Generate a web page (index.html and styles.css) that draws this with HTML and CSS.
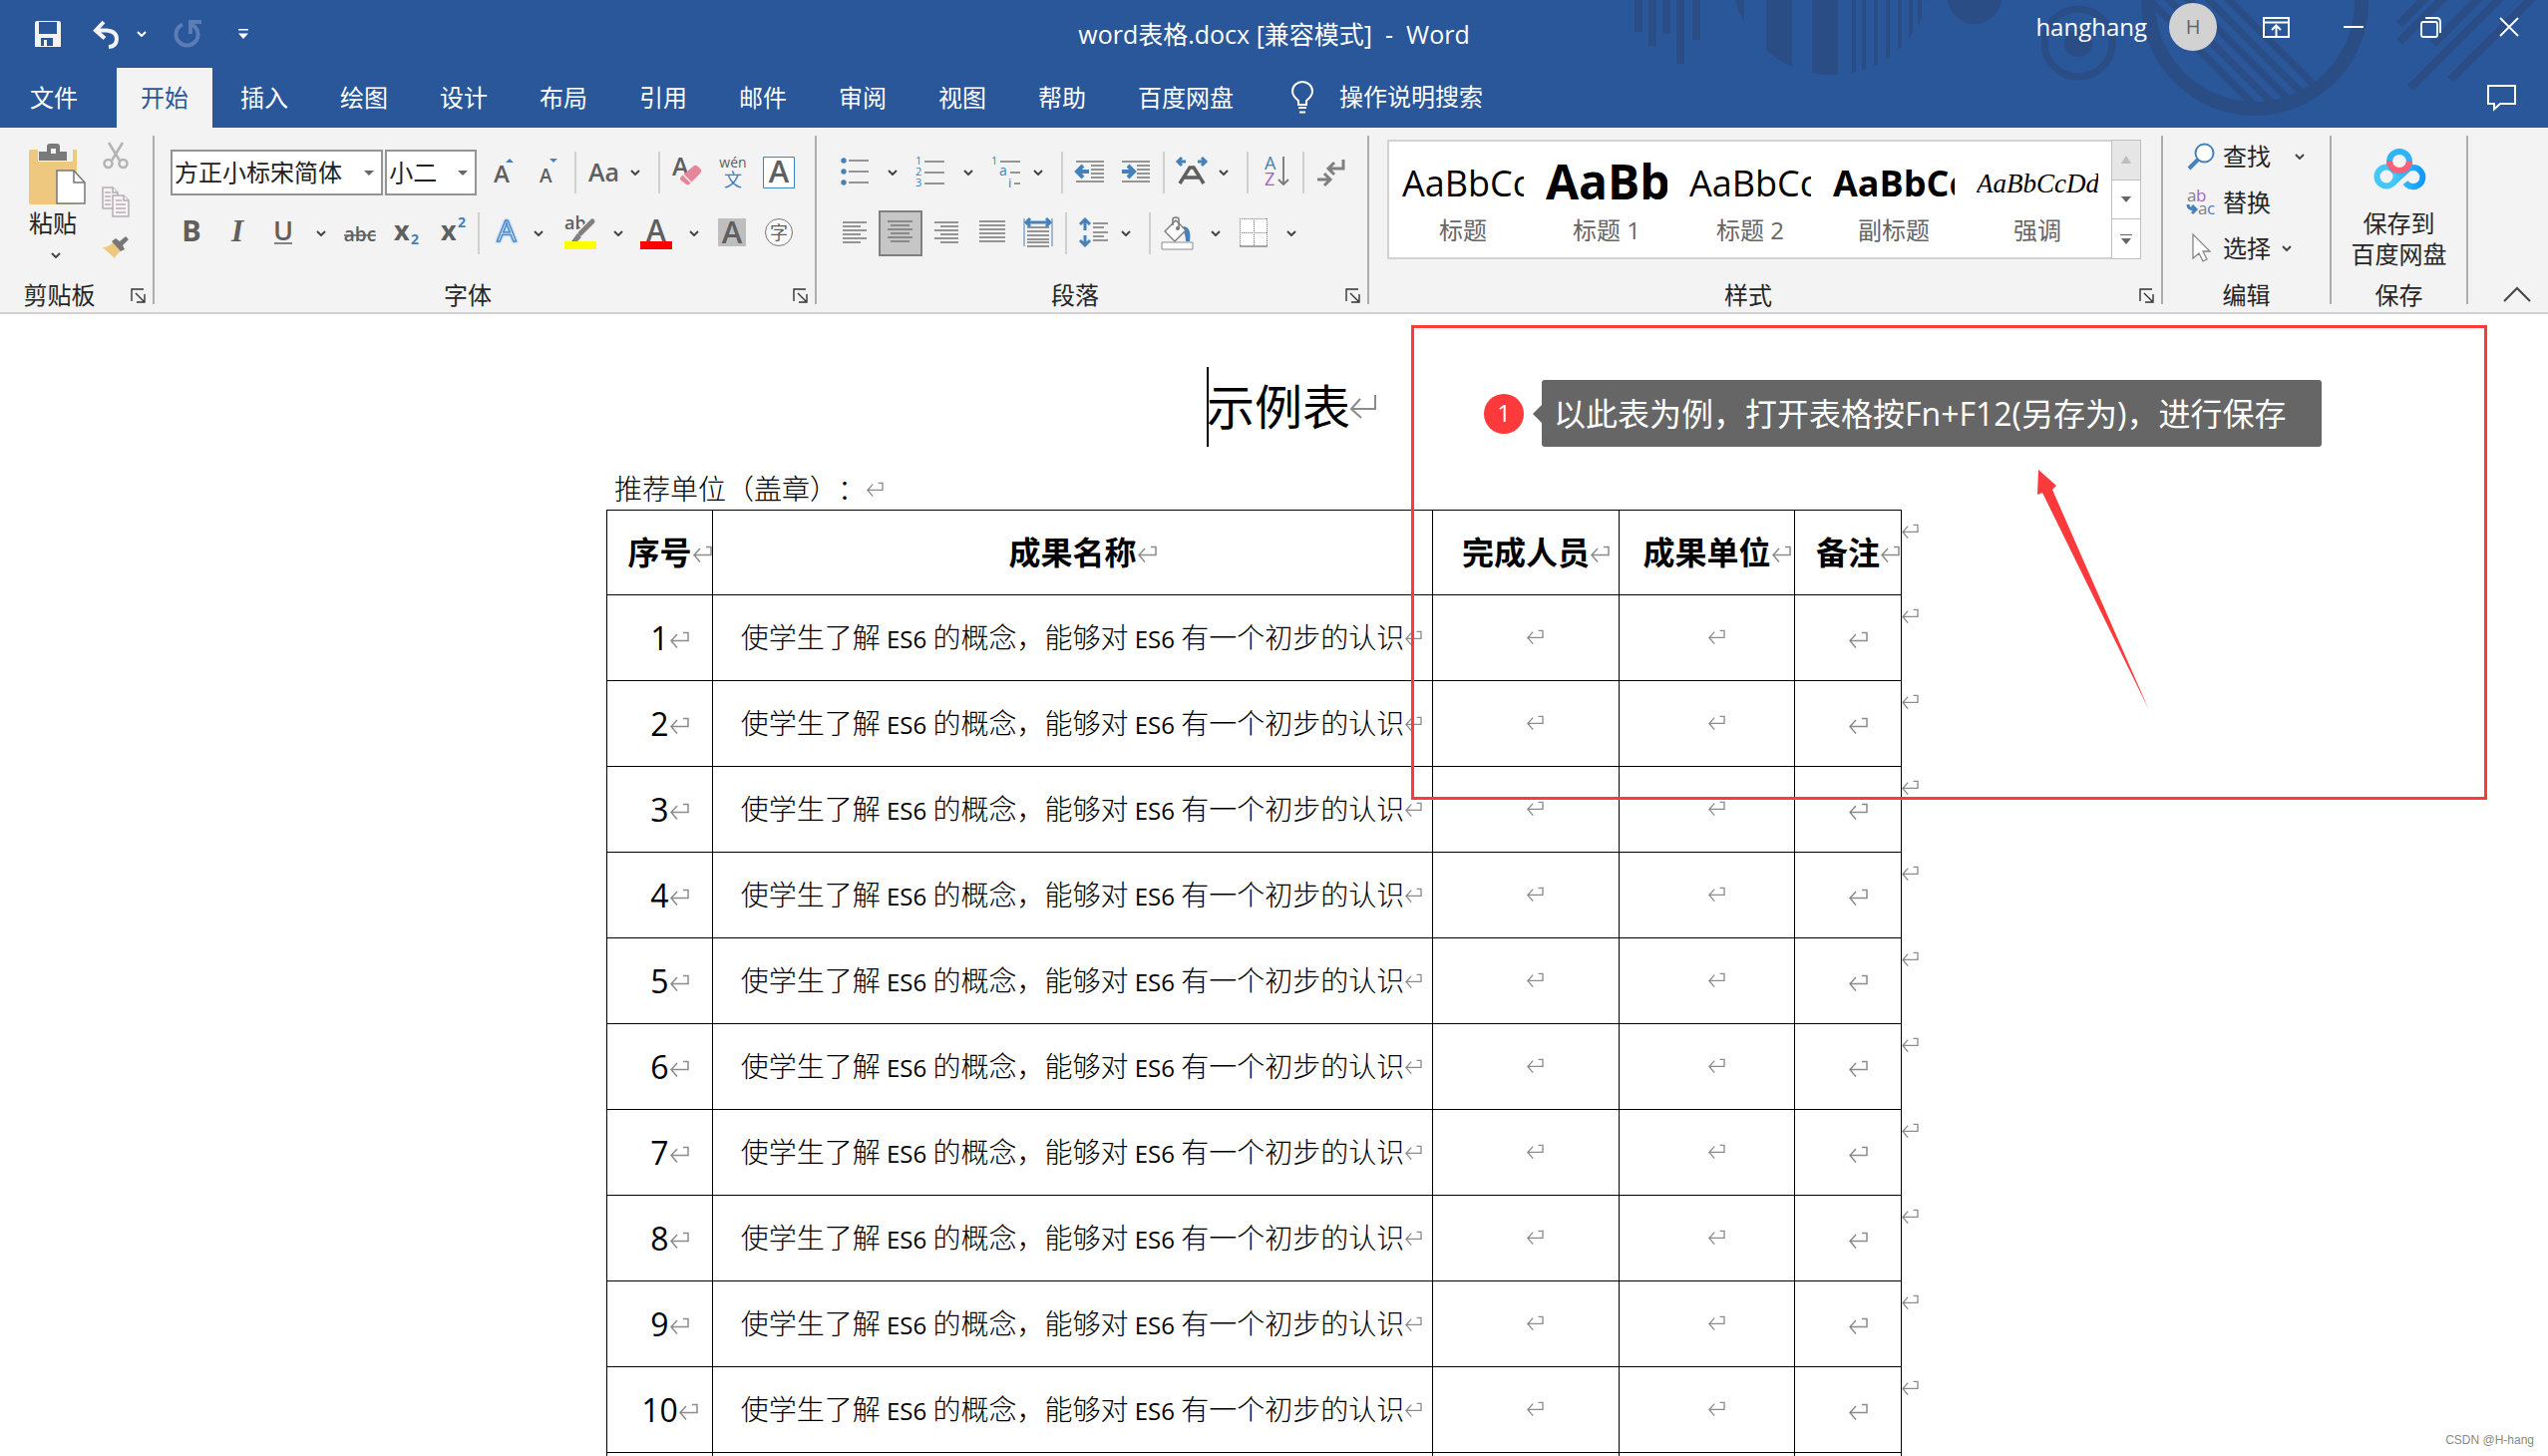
FILE: index.html
```html
<!DOCTYPE html>
<html lang="zh-CN">
<head>
<meta charset="utf-8">
<title>word表格.docx - Word</title>
<link rel="stylesheet" href="styles.css">
</head>
<body>
<svg class="defs" aria-hidden="true">
  <symbol id="chev" viewBox="0 0 10 6"><path d="M1 1l4 4 4-4" fill="none" stroke="currentColor" stroke-width="2"/></symbol>
  <symbol id="launch" viewBox="0 0 15 15"><path d="M1 13V1h12M5 5l8 8M14 6v8H6" fill="none" stroke="#333" stroke-width="1.4"/></symbol>
  <symbol id="ret" viewBox="0 0 20 18"><path d="M14 1.5h5v8H2M8 3L2 9.500l6 7" fill="none" stroke="#8c8c8c" stroke-width="1.500"/></symbol>
  <symbol id="retbig" viewBox="0 0 26 24"><path d="M25 0v14H1M10 4L1 14l10 9" fill="none" stroke="#8c8c8c" stroke-width="2"/></symbol>
</svg>
<div class="app">
<header class="header">
  <svg class="decor" viewBox="0 0 955 128" aria-hidden="true">
    <defs>
      <clipPath id="c1"><circle cx="237" cy="-25" r="100"/></clipPath>
      <clipPath id="c2"><circle cx="661" cy="2" r="104"/></clipPath>
    </defs>
    <g fill="#2a4d85">
      <path d="M39 0h8v32h-8zM53 0h8v46h-8zM67 0h8v34h-8zM81 0h8v64h-8zM97 0h8v40h-8z"/>
      <path clip-path="url(#c1)" d="M133 0h16v80h-16zM171 0h26v80h-26zM217 0h26v80h-26zM257 0h4v80h-4zM267 0h4v80h-4zM279 0h4v80h-4zM291 0h4v80h-4zM303 0h4v80h-4zM314 0h4v80h-4zM323 0h4v80h-4zM333 0h4v80h-4z"/>
      <circle cx="380" cy="-3" r="27"/>
      <circle cx="484" cy="43" r="14"/>
    </g>
    <g fill="none" stroke="#2a4d85">
      <circle cx="484" cy="43" r="34" stroke-width="7"/>
      <circle cx="661" cy="2" r="107" stroke-width="14"/>
      <path clip-path="url(#c2)" stroke-width="7" d="M540-15l130 130M560-15l130 130M580-15l130 130M600-15l130 130M620-15l130 130"/>
      <path stroke-width="8" d="M806 24l30-30M806 42l50-50M840 44l50-50M817 88l100-100M857 80l100-100"/>
    </g>
  </svg>
  <div class="titlebar">
    <div class="quick">
      <button class="qbtn" aria-label="保存"><svg width="26" height="26" viewBox="0 0 26 26"><path fill="#f3f3f3" fill-rule="evenodd" d="M0 2q0-2 2-2h22q2 0 2 2v24H0zM4 1v12h18V1zM6 17v8h3v-6h3v6h6v-8z"/></svg></button>
      <div class="undo"><button class="qbtn" aria-label="撤消"><svg width="27" height="27" viewBox="0 0 27 27"><path d="M11 1L3 9.500l9 8M4 9.500h10q10 1 10 8.500t-8 8" fill="none" stroke="#f3f3f3" stroke-width="4"/></svg></button><button class="qdrop" aria-label="撤消选项"><svg width="10" height="6"><use href="#chev"/></svg></button></div>
      <button class="qbtn" aria-label="重复"><svg width="28" height="28" viewBox="0 0 28 28"><path d="M9 4.500a11 11 0 1 0 9 0M17 14V2h11" fill="none" stroke="#5a7db5" stroke-width="4"/></svg></button>
      <button class="qdrop" aria-label="自定义快速访问工具栏"><svg width="10" height="10" viewBox="0 0 10 10"><path d="M0 0h10v1.500H0zM0 4.500h10L5 10z" fill="#fff"/></svg></button>
    </div>
    <h1 class="doc-name">word表格.docx [兼容模式]&nbsp; -&nbsp; Word</h1>
    <div class="account">
      <span class="user">hanghang</span><span class="avatar">H</span>
      <button class="win" aria-label="功能区显示选项"><svg width="27" height="21" viewBox="0 0 27 21"><path d="M1 1h25v19H1zM1 5.500h25M13.500 19V9M9 13l4.500-4.500L18 13" fill="none" stroke="#fff" stroke-width="2"/></svg></button>
      <button class="win" aria-label="最小化"><svg width="20" height="2"><path d="M0 0h20v2H0z" fill="#fff"/></svg></button>
      <button class="win" aria-label="还原"><svg width="22" height="21" viewBox="0 0 22 21"><path d="M3 5h12q2 0 2 2v11q0 2-2 2H3q-2 0-2-2V7q0-2 2-2zM5 1h11q4 0 4 4v11" fill="none" stroke="#fff" stroke-width="1.800"/></svg></button>
      <button class="win" aria-label="关闭"><svg width="20" height="20" viewBox="0 0 20 20"><path d="M1 1l18 18M19 1L1 19" stroke="#fff" stroke-width="1.800"/></svg></button>
    </div>
  </div>
  <nav class="tabs">
    <button class="tab file">文件</button><button class="tab active">开始</button><button class="tab">插入</button><button class="tab">绘图</button><button class="tab">设计</button><button class="tab">布局</button><button class="tab">引用</button><button class="tab">邮件</button><button class="tab">审阅</button><button class="tab">视图</button><button class="tab">帮助</button><button class="tab">百度网盘</button>
    <button class="tellme"><svg width="22" height="33" viewBox="0 0 22 33"><path d="M7 24v-4Q1 15 1 10.500a10 9.500 0 0 1 20 0Q21 15 15 20v4zM7 27h8M8 31.500h6" fill="none" stroke="#fff" stroke-width="2"/></svg>操作说明搜索</button>
    <button class="comment" aria-label="批注"><svg width="29" height="26" viewBox="0 0 29 26"><path d="M1 1h27v18H13l-6 5.500V19H1z" fill="none" stroke="#fff" stroke-width="2"/></svg></button>
  </nav>
</header>

<section class="ribbon" aria-label="功能区">
  <div class="group g-clip">
    <div class="clip">
      <button class="paste">
        <svg width="57" height="61" viewBox="0 0 57 61"><path d="M2 6h46v55H2q-2 0-2-2V8q0-2 2-2z" fill="#edc87e"/><path d="M9 4h35v14H9z" fill="#f3f3f3"/><path fill="#7a7a7a" fill-rule="evenodd" d="M10 8h8V3q0-3 3-3h7q3 0 3 3v5h7v9H10zM22 5h5v5h-5z"/><path d="M28 27h17l11 12v21H28z" fill="#fff" stroke="#777" stroke-width="1.500"/><path d="M45 27v12h11" fill="none" stroke="#777" stroke-width="1.500"/></svg>
        <span>粘贴</span><svg class="chev" width="10" height="6"><use href="#chev"/></svg>
      </button>
      <div class="clip-side">
        <button class="side" aria-label="剪切"><svg width="26" height="28" viewBox="0 0 26 28"><g fill="none" stroke="#b4b4b4" stroke-width="2.500"><path d="M6 1l11 18M20 1L9 19"/><circle cx="5.500" cy="22" r="4"/><circle cx="20.500" cy="22" r="4"/></g></svg></button>
        <button class="side" aria-label="复制"><svg width="28" height="31" viewBox="0 0 28 31"><g fill="#f6f2f6" stroke="#b5aeb5" stroke-width="1.500"><path d="M1 1h10l5 5v16H1z"/><path d="M11 9h11l5 5v16H11z"/><path d="M11 1v5h5M22 9v5h5M3 6h6M3 10h6M3 14h6M3 18h6M14 14h6M14 18h10M14 22h10M14 26h10"/></g></svg></button>
        <button class="side" aria-label="格式刷"><svg width="26" height="22" viewBox="0 0 26 22"><path d="M0 11q6 0 10-5l9 8q-5 3-7 8z" fill="#edc87e"/><path d="M9 5l4-3 4 3 6-5 3 3-6 6 2 4-4 2z" fill="#777"/></svg></button>
      </div>
    </div>
    <div class="label"><span>剪贴板</span><button class="launcher" aria-label="剪贴板设置"><svg width="15" height="15"><use href="#launch"/></svg></button></div>
  </div>

  <div class="group g-font">
    <div class="row row-top">
      <span class="combo combo-font"><select aria-label="字体"><option>方正小标宋简体</option></select></span>
      <span class="combo combo-size"><select aria-label="字号"><option>小二</option></select></span>
      <button class="tool" aria-label="增大字号"><svg width="34" height="32"><text x="9" y="26" font-size="24" class="ga">A</text><path d="M21 6l4-4 4 4z" fill="#4681b9"/></svg></button>
      <button class="tool" aria-label="减小字号"><svg width="34" height="32"><text x="9" y="26" font-size="19" class="ga">A</text><path d="M19 2h8l-4 4z" fill="#4681b9"/></svg></button>
      <i class="sep"></i>
      <div class="split tight"><button class="tool" aria-label="更改大小写"><svg width="34" height="32"><text x="2" y="25" font-size="25" class="ga">Aa</text></svg></button><button class="drop" aria-label="更改大小写选项"><svg width="10" height="6"><use href="#chev"/></svg></button></div>
      <div class="cluster">
        <i class="sep"></i>
        <button class="tool" aria-label="清除格式"><svg width="32" height="32"><text x="1" y="19" font-size="25" class="ga">A</text><path d="M23 9q2-1 4 1l3 3q1 2-1 4L18 28q-2 1-4-1l-4-3q-2-2 0-4z" fill="#e6869a"/><path d="M12 18l8 8" stroke="#f3f3f3" stroke-width="1.500"/></svg></button>
        <button class="tool" aria-label="拼音指南"><svg width="32" height="34"><text x="16" y="12" font-size="14" class="g mid">wén</text><text x="16" y="31" font-size="18" class="b mid">文</text></svg></button>
        <button class="tool" aria-label="字符边框"><svg width="32" height="32"><path d="M.5.5h31v31H.5z" fill="#fff" stroke="#4681b9"/><text x="16" y="26" font-size="31" class="ga mid">A</text></svg></button>
      </div>
    </div>
    <div class="row">
      <button class="tool" aria-label="加粗"><svg width="32" height="32"><text x="16" y="24" font-size="29" font-weight="700" class="g mid">B</text></svg></button>
      <button class="tool" aria-label="倾斜"><svg width="32" height="32"><text x="16" y="24" font-size="31" class="g mid serif">I</text></svg></button>
      <div class="split"><button class="tool" aria-label="下划线"><svg width="32" height="34"><text x="16" y="24" font-size="27" class="ga mid">U</text><path d="M7 27h18" stroke="#5f5f5f" stroke-width="1.500"/></svg></button><button class="drop" aria-label="下划线选项"><svg width="10" height="6"><use href="#chev"/></svg></button></div>
      <button class="tool" aria-label="删除线"><svg width="34" height="32"><text x="18" y="24" font-size="19" class="ga mid">abc</text><path d="M2 18h32" stroke="#5f5f5f" stroke-width="1.500"/></svg></button>
      <button class="tool" aria-label="下标"><svg width="32" height="34"><text x="5" y="24" font-size="27" font-weight="700" class="g">x</text><text x="22" y="28" font-size="14" font-weight="700" class="b">2</text></svg></button>
      <button class="tool" aria-label="上标"><svg width="32" height="34"><text x="6" y="24" font-size="27" font-weight="700" class="g">x</text><text x="23" y="11" font-size="14" font-weight="700" class="b">2</text></svg></button>
      <i class="sep"></i>
      <div class="split tight"><button class="tool" aria-label="文本效果"><svg width="32" height="32"><text x="16" y="24" font-size="30" class="mid glow">A</text></svg></button><button class="drop" aria-label="文本效果选项"><svg width="10" height="6"><use href="#chev"/></svg></button></div>
      <div class="split"><button class="tool" aria-label="突出显示"><svg width="32" height="34"><text x="0" y="13" font-size="18" class="ga">ab</text><path d="M29 4L15 18" stroke="#f3f3f3" stroke-width="8"/><path d="M28 5L16 17" stroke="#808080" stroke-width="5" stroke-linecap="round"/><path d="M13 17l4 4-4 4H7z" fill="#808080"/><path d="M0 25h32v8H0z" fill="#ff0"/></svg></button><button class="drop" aria-label="突出显示颜色"><svg width="10" height="6"><use href="#chev"/></svg></button></div>
      <div class="split"><button class="tool" aria-label="字体颜色"><svg width="32" height="34"><text x="16" y="25" font-size="30" class="ga mid">A</text><path d="M0 25h32v8H0z" fill="#f00"/></svg></button><button class="drop" aria-label="字体颜色选项"><svg width="10" height="6"><use href="#chev"/></svg></button></div>
      <button class="tool" aria-label="字符底纹"><svg width="32" height="32"><path d="M2 1h28v28H2z" fill="#bebebe"/><text x="16" y="26" font-size="31" class="ga mid">A</text></svg></button>
      <button class="tool" aria-label="带圈字符"><svg width="32" height="32"><circle cx="17" cy="15" r="13.500" fill="#fafafa" stroke="#777"/><text x="17" y="22" font-size="18" class="g mid">字</text></svg></button>
    </div>
    <div class="label"><span>字体</span><button class="launcher" aria-label="字体设置"><svg width="15" height="15"><use href="#launch"/></svg></button></div>
  </div>

  <div class="group g-para">
    <div class="row">
      <div class="split"><button class="tool" aria-label="项目符号"><svg width="32" height="32"><g fill="#4681b9"><circle cx="5" cy="4" r="2.700"/><circle cx="5" cy="15" r="2.700"/><circle cx="5" cy="26" r="2.700"/></g><path class="ln" d="M10 4h20M10 15h20M10 26h20"/></svg></button><button class="drop" aria-label="项目符号选项"><svg width="10" height="6"><use href="#chev"/></svg></button></div>
      <div class="split"><button class="tool" aria-label="编号"><svg width="32" height="34"><text x="1" y="9" font-size="11" class="b">1</text><text x="1" y="20" font-size="11" class="b">2</text><text x="1" y="31" font-size="11" class="b">3</text><path class="ln" d="M10 6h20M10 17h20M10 28h20"/></svg></button><button class="drop" aria-label="编号选项"><svg width="10" height="6"><use href="#chev"/></svg></button></div>
      <div class="split tight"><button class="tool" aria-label="多级列表"><svg width="32" height="34"><text x="1" y="9" font-size="11" class="b">1</text><text x="9" y="20" font-size="14" class="b">a</text><text x="18" y="32" font-size="13" class="b">i</text><path class="ln" d="M10 6h20M20 17h10M24 28h6"/></svg></button><button class="drop" aria-label="多级列表选项"><svg width="10" height="6"><use href="#chev"/></svg></button></div>
      <i class="sep"></i>
      <button class="tool" aria-label="减少缩进量"><svg width="32" height="32"><path class="ln" d="M2 5h28M17 9h13M17 13h13M17 17h13M17 21h13M2 25h28"/><path d="M15 15H4M9 9l-6 6 6 6" class="ar"/></svg></button>
      <button class="tool" aria-label="增加缩进量"><svg width="32" height="32"><path class="ln" d="M2 5h28M17 9h13M17 13h13M17 17h13M17 21h13M2 25h28"/><path d="M2 15h11M8 9l6 6-6 6" class="ar"/></svg></button>
      <i class="sep"></i>
      <div class="split tight"><button class="tool" aria-label="中文版式"><svg width="34" height="32"><path d="M11 5H3M7 1L3 5l4 4M23 5h8M27 1l4 4-4 4" class="ar thin"/><path d="M5 27L15 11h4l10 16M9 21h16" fill="none" stroke="#5f5f5f" stroke-width="3.500"/></svg></button><button class="drop" aria-label="中文版式选项"><svg width="10" height="6"><use href="#chev"/></svg></button></div>
      <i class="sep"></i>
      <button class="tool" aria-label="排序"><svg width="32" height="34"><text x="5" y="14" font-size="18" class="b">A</text><text x="5" y="30" font-size="18" class="v">Z</text><path d="M24 1v28M19 24l5 5 5-5" fill="none" stroke="#777" stroke-width="1.800"/></svg></button>
      <i class="sep"></i>
      <button class="tool" aria-label="显示编辑标记"><svg width="32" height="32"><path d="M28 3v9H15M19 6l-6 6 6 6M2 23h12M9 17l6 6-6 6" fill="none" stroke="#808080" stroke-width="3"/></svg></button>
    </div>
    <div class="row">
      <button class="tool" aria-label="左对齐"><svg width="32" height="32"><path class="ln" d="M4 5h24M4 9h18M4 13h24M4 17h18M4 21h24M4 25h18"/></svg></button>
      <button class="tool on" aria-label="居中"><svg width="32" height="32"><path class="ln" d="M3 4h25M6 8h19M3 12h25M6 16h19M3 20h25M6 24h19"/></svg></button>
      <button class="tool" aria-label="右对齐"><svg width="32" height="32"><path class="ln" d="M4 5h24M10 9h18M4 13h24M10 17h18M4 21h24M10 25h18"/></svg></button>
      <button class="tool" aria-label="两端对齐"><svg width="32" height="32"><path class="ln" d="M3 4h26M3 8h26M3 12h26M3 16h26M3 20h26M3 24h26"/></svg></button>
      <button class="tool" aria-label="分散对齐"><svg width="32" height="32"><path d="M2 1v28M30 1v28" stroke="#4681b9"/><path class="ln" d="M5 10h22M5 14h22M5 18h22M5 22h22M5 25h22M5 29h22"/><path d="M4 5h24M8 1L4 5l4 4M24 1l4 4-4 4" class="ar thin"/></svg></button>
      <i class="sep"></i>
      <div class="split tight"><button class="tool" aria-label="行距"><svg width="32" height="32"><path d="M7 2v11M2 7l5-5 5 5M7 18v11M2 23l5 5 5-5" class="ar thin"/><path class="ln" d="M15 6h15M15 10h11M15 15h15M15 19h11M15 23h15"/></svg></button><button class="drop" aria-label="行距选项"><svg width="10" height="6"><use href="#chev"/></svg></button></div>
      <i class="sep"></i>
      <div class="split"><button class="tool" aria-label="底纹"><svg width="34" height="34"><path d="M23 10q8 1 6 15h-4q0-8-4-12z" fill="#4681b9"/><path d="M4 15L15 4l10 10-11 11z" fill="#fff" stroke="#777" stroke-width="1.300"/><path d="M12 9V3q0-2 3-2t3 2v9" fill="none" stroke="#777" stroke-width="1.500"/><circle cx="17" cy="12" r="2" fill="#777"/><path d="M1 26h31v7H1z" fill="#fff" stroke="#8c8c8c"/></svg></button><button class="drop" aria-label="底纹选项"><svg width="10" height="6"><use href="#chev"/></svg></button></div>
      <div class="split"><button class="tool" aria-label="边框"><svg width="32" height="32"><path d="M2 1h28v28H2z" fill="#fff"/><path d="M2 1.500h28M2 15.500h28M2.500 1v28M16.500 1v28M29.500 1v28" stroke="#777" stroke-dasharray="1 1"/><path d="M2 29h28" class="ln"/></svg></button><button class="drop" aria-label="边框选项"><svg width="10" height="6"><use href="#chev"/></svg></button></div>
    </div>
    <div class="label"><span>段落</span><button class="launcher" aria-label="段落设置"><svg width="15" height="15"><use href="#launch"/></svg></button></div>
  </div>

  <div class="group g-styles">
    <div class="gallery">
      <div class="cards">
        <button class="style"><span class="sample">AaBbCc</span><span>标题</span></button>
        <button class="style"><span class="sample big">AaBb</span><span>标题 1</span></button>
        <button class="style"><span class="sample">AaBbCc</span><span>标题 2</span></button>
        <button class="style"><span class="sample strong">AaBbCc</span><span>副标题</span></button>
        <button class="style"><span class="sample em">AaBbCcDd</span><span>强调</span></button>
      </div>
      <div class="scroll">
        <button disabled aria-label="上一行"><svg width="10" height="8"><path d="M0 8l5-8 5 8z" fill="#bdbdbd"/></svg></button>
        <button aria-label="下一行"><svg width="10" height="6"><path d="M0 0h10L5 6z" fill="#666"/></svg></button>
        <button aria-label="其他"><svg width="12" height="10"><path d="M0 0h12v1H0zM1 4h10l-5 6z" fill="#666"/></svg></button>
      </div>
    </div>
    <div class="label"><span>样式</span><button class="launcher" aria-label="样式设置"><svg width="15" height="15"><use href="#launch"/></svg></button></div>
  </div>

  <div class="group g-edit">
    <div class="edit">
      <button class="cmd"><svg width="29" height="28" viewBox="0 0 29 28"><path d="M12 16L2 26" stroke="#4681b9" stroke-width="4"/><circle cx="17.500" cy="10.500" r="9" fill="#fff" stroke="#4681b9" stroke-width="2"/></svg>查找<svg class="chev far" width="10" height="6"><use href="#chev"/></svg></button>
      <button class="cmd"><svg width="29" height="30" viewBox="0 0 29 30"><text x="0" y="14" font-size="17" class="lg">a</text><text x="9" y="14" font-size="17" class="v">b</text><text x="11" y="27" font-size="17" class="lg">a</text><text x="20" y="27" font-size="17" class="b">c</text><path d="M1 17q0 5 7 5M5 18l4 4-4 4" class="ar thin"/></svg>替换</button>
      <button class="cmd"><svg width="29" height="30" viewBox="0 0 29 30"><path d="M6 1v24l6-5 4 8 4-2-4-8h7z" fill="#fff" stroke="#888" stroke-width="1.300"/></svg>选择<svg class="chev" width="10" height="6"><use href="#chev"/></svg></button>
    </div>
    <div class="label"><span>编辑</span></div>
  </div>

  <div class="group g-save">
    <button class="cloud">
      <svg width="52" height="42" viewBox="0 0 52 42"><defs><linearGradient id="bl"><stop offset="0" stop-color="#45c8f8"/><stop offset="1" stop-color="#0f9bf8"/></linearGradient></defs><g fill="none" stroke-width="6"><circle cx="13" cy="28" r="9.500" stroke="#45c8f8"/><path d="M32 34a9.500 9.500 0 1 0 1-12L20 34" stroke="url(#bl)"/><circle cx="26" cy="13" r="10" stroke="#2fb4f8"/><path d="M16 12a10 10 0 0 0 20 0" stroke="#fb5f7c"/></g></svg>
      <span>保存到<br>百度网盘</span>
    </button>
    <div class="label"><span>保存</span></div>
  </div>
  <button class="collapse" aria-label="折叠功能区"><svg width="28" height="16" viewBox="0 0 28 16"><path d="M1 15L14 2l13 13" fill="none" stroke="#444" stroke-width="2"/></svg></button>
</section>

<main class="doc">
  <article class="page">
    <h2 class="doc-title"><span class="caret"></span>示例表<svg class="mark lg-mark"><use href="#retbig"/></svg></h2>
    <p class="unit">推荐单位（盖章）：<svg class="mark sm"><use href="#ret"/></svg></p>
    <table class="grid">
      <colgroup><col class="w1"><col class="w2"><col class="w3"><col class="w4"><col class="w5"></colgroup>
      <thead><tr><th>序号<svg class="mark"><use href="#ret"/></svg></th><th>成果名称<svg class="mark"><use href="#ret"/></svg></th><th>完成人员<svg class="mark"><use href="#ret"/></svg></th><th>成果单位<svg class="mark"><use href="#ret"/></svg></th><th class="last">备注<svg class="mark"><use href="#ret"/></svg><svg class="eor"><use href="#ret"/></svg></th></tr></thead>
      <tbody>
      <tr><td>1<svg class="mark"><use href="#ret"/></svg></td><td class="name">使学生了解<span> ES6 </span>的概念，能够对<span> ES6 </span>有一个初步的认识<svg class="mark sm"><use href="#ret"/></svg></td><td><svg class="mark sm"><use href="#ret"/></svg></td><td><svg class="mark sm"><use href="#ret"/></svg></td><td class="last"><svg class="mark"><use href="#ret"/></svg><svg class="eor"><use href="#ret"/></svg></td></tr>
      <tr><td>2<svg class="mark"><use href="#ret"/></svg></td><td class="name">使学生了解<span> ES6 </span>的概念，能够对<span> ES6 </span>有一个初步的认识<svg class="mark sm"><use href="#ret"/></svg></td><td><svg class="mark sm"><use href="#ret"/></svg></td><td><svg class="mark sm"><use href="#ret"/></svg></td><td class="last"><svg class="mark"><use href="#ret"/></svg><svg class="eor"><use href="#ret"/></svg></td></tr>
      <tr><td>3<svg class="mark"><use href="#ret"/></svg></td><td class="name">使学生了解<span> ES6 </span>的概念，能够对<span> ES6 </span>有一个初步的认识<svg class="mark sm"><use href="#ret"/></svg></td><td><svg class="mark sm"><use href="#ret"/></svg></td><td><svg class="mark sm"><use href="#ret"/></svg></td><td class="last"><svg class="mark"><use href="#ret"/></svg><svg class="eor"><use href="#ret"/></svg></td></tr>
      <tr><td>4<svg class="mark"><use href="#ret"/></svg></td><td class="name">使学生了解<span> ES6 </span>的概念，能够对<span> ES6 </span>有一个初步的认识<svg class="mark sm"><use href="#ret"/></svg></td><td><svg class="mark sm"><use href="#ret"/></svg></td><td><svg class="mark sm"><use href="#ret"/></svg></td><td class="last"><svg class="mark"><use href="#ret"/></svg><svg class="eor"><use href="#ret"/></svg></td></tr>
      <tr><td>5<svg class="mark"><use href="#ret"/></svg></td><td class="name">使学生了解<span> ES6 </span>的概念，能够对<span> ES6 </span>有一个初步的认识<svg class="mark sm"><use href="#ret"/></svg></td><td><svg class="mark sm"><use href="#ret"/></svg></td><td><svg class="mark sm"><use href="#ret"/></svg></td><td class="last"><svg class="mark"><use href="#ret"/></svg><svg class="eor"><use href="#ret"/></svg></td></tr>
      <tr><td>6<svg class="mark"><use href="#ret"/></svg></td><td class="name">使学生了解<span> ES6 </span>的概念，能够对<span> ES6 </span>有一个初步的认识<svg class="mark sm"><use href="#ret"/></svg></td><td><svg class="mark sm"><use href="#ret"/></svg></td><td><svg class="mark sm"><use href="#ret"/></svg></td><td class="last"><svg class="mark"><use href="#ret"/></svg><svg class="eor"><use href="#ret"/></svg></td></tr>
      <tr><td>7<svg class="mark"><use href="#ret"/></svg></td><td class="name">使学生了解<span> ES6 </span>的概念，能够对<span> ES6 </span>有一个初步的认识<svg class="mark sm"><use href="#ret"/></svg></td><td><svg class="mark sm"><use href="#ret"/></svg></td><td><svg class="mark sm"><use href="#ret"/></svg></td><td class="last"><svg class="mark"><use href="#ret"/></svg><svg class="eor"><use href="#ret"/></svg></td></tr>
      <tr><td>8<svg class="mark"><use href="#ret"/></svg></td><td class="name">使学生了解<span> ES6 </span>的概念，能够对<span> ES6 </span>有一个初步的认识<svg class="mark sm"><use href="#ret"/></svg></td><td><svg class="mark sm"><use href="#ret"/></svg></td><td><svg class="mark sm"><use href="#ret"/></svg></td><td class="last"><svg class="mark"><use href="#ret"/></svg><svg class="eor"><use href="#ret"/></svg></td></tr>
      <tr><td>9<svg class="mark"><use href="#ret"/></svg></td><td class="name">使学生了解<span> ES6 </span>的概念，能够对<span> ES6 </span>有一个初步的认识<svg class="mark sm"><use href="#ret"/></svg></td><td><svg class="mark sm"><use href="#ret"/></svg></td><td><svg class="mark sm"><use href="#ret"/></svg></td><td class="last"><svg class="mark"><use href="#ret"/></svg><svg class="eor"><use href="#ret"/></svg></td></tr>
      <tr><td>10<svg class="mark"><use href="#ret"/></svg></td><td class="name">使学生了解<span> ES6 </span>的概念，能够对<span> ES6 </span>有一个初步的认识<svg class="mark sm"><use href="#ret"/></svg></td><td><svg class="mark sm"><use href="#ret"/></svg></td><td><svg class="mark sm"><use href="#ret"/></svg></td><td class="last"><svg class="mark"><use href="#ret"/></svg><svg class="eor"><use href="#ret"/></svg></td></tr>
      <tr><td></td><td></td><td></td><td></td><td></td></tr>
      </tbody>
    </table>
  </article>
  <div class="frame">
    <div class="callout"><span class="num">1</span><span class="tip">以此表为例，打开表格按Fn+F12(另存为)，进行保存</span></div>
    <svg class="arrow" width="112" height="242" viewBox="0 0 112 242"><path d="M1 0l18 16-4 4 97 221L5 23l-5 2z" fill="#fc3a3b"/></svg>
  </div>
  <small class="credit">CSDN @H-hang</small>
</main>
</div>
</body>
</html>
```
FILE: styles.css
```css
* { box-sizing: border-box; }
body { margin: 0; font: 24px/1.2 "Open Sans", "Noto Sans CJK SC", sans-serif; color: #262626; background: #fff; }
button { font: inherit; color: inherit; background: none; border: 0; padding: 0; margin: 0; }
svg { display: block; flex: none; overflow: visible; }
.defs { position: absolute; width: 0; height: 0; }
.app { height: 100vh; display: flex; flex-direction: column; overflow: hidden; }

/* Header */
.header { position: relative; background: #2a569a; color: #fff; flex: none; }
.decor { position: absolute; right: 0; top: 0; width: 955px; height: 128px; overflow: hidden; }
.titlebar { position: relative; display: grid; grid-template-columns: 1fr auto 1fr; align-items: center; height: 68px; }
.quick { display: flex; gap: 10px; padding-left: 24px; }
.qbtn, .qdrop { display: flex; align-items: center; justify-content: center; width: 48px; height: 48px; }
.qdrop { width: 24px; }
.quick > .qdrop { margin-left: 10px; }
.undo { display: flex; }
.doc-name { margin: 0; font-size: 25px; font-weight: 400; line-height: 36px; white-space: nowrap; }
.account { display: flex; align-items: center; justify-content: flex-end; align-self: start; height: 54px; }
.avatar { display: grid; place-items: center; width: 48px; height: 48px; margin: 0 20px 0 22px; border-radius: 50%; background: #d2d2d2; color: #666; font-size: 20px; }
.win { display: grid; place-items: center; width: 78px; height: 54px; }
.tabs { position: relative; display: flex; gap: 4px; height: 60px; padding-left: 6px; }
.tab { padding: 0 24px; line-height: 56px; }
.file { margin-right: 11px; }
.active { background: #f3f3f3; color: #2a569a; }
.tellme { display: flex; align-items: center; gap: 26px; margin-left: 30px; padding-bottom: 2px; }
.comment { margin-left: auto; padding-right: 32px; }

/* Ribbon */
.ribbon { display: flex; flex: none; height: 187px; padding: 8px 0; background: #f3f3f3; border-bottom: 2px solid #d2d2d2; }
.group { display: flex; flex-direction: column; flex: none; border-right: 2px solid #adadad; }
.g-clip { width: 155px; }
.g-font { width: 664px; padding: 13px 0 0 14px; }
.g-para { width: 554px; padding: 13px 0 0 15px; }
.g-styles { flex: 1; min-width: 0; padding: 4px 0 0 18px; }
.g-edit { width: 169px; }
.g-save { width: 137px; }
.label { display: flex; align-items: center; height: 18px; margin-top: auto; line-height: 18px; }
.label span { flex: 1; text-align: center; }
.g-font .label { margin-left: -14px; }
.g-para .label { margin-left: -15px; }
.g-styles .label { margin-left: -18px; }
.launcher { display: flex; justify-content: flex-end; width: 34px; padding-right: 7px; }
.chev, .drop { color: #444; }

.clip { display: flex; padding-left: 29px; }
.paste { display: flex; flex-direction: column; align-items: flex-start; width: 57px; padding-top: 8px; line-height: 30px; }
.paste span { padding-top: 4px; }
.paste .chev { margin: 14px 0 0 22px; }
.clip-side { display: flex; flex-direction: column; margin: -3px 0 0 7px; }
.side { display: grid; place-items: center; width: 46px; height: 46px; }

.row { display: flex; align-items: center; height: 48px; }
.row + .row { margin-top: 13px; }
.row-top { padding-left: 2px; padding-right: 13px; }
.cluster { display: flex; align-items: center; margin-left: auto; }
.combo { position: relative; height: 46px; margin-right: 2px; }
.combo::after { content: ""; position: absolute; right: 9px; top: 21px; border: 5px solid transparent; border-top-color: #666; border-bottom: 0; }
.combo select { appearance: none; width: 100%; height: 100%; padding: 0 2px; border: 2px solid #949494; border-radius: 0; background: #fff; color: #222; font: inherit; }
.combo-font { width: 214px; }
.combo-size { width: 92px; }
.tool { display: grid; place-items: center; flex: none; width: 46px; height: 46px; }
.tool.on { width: 44px; margin: 0 1px; background: #c6c6c6; border: 2px solid #808080; }
.split { display: flex; align-items: center; width: 76px; }
.drop { display: flex; align-items: center; justify-content: center; width: 30px; height: 46px; }
.tight { width: 74px; }
.tight .drop { width: 28px; justify-content: flex-start; padding-left: 4px; }
.sep { flex: none; width: 2px; height: 42px; margin: 0 4px; background: #d0d0d0; }
.g, .ga { fill: #5f5f5f; }
.ga { font-weight: 600; }
.lg { fill: #808080; }
.b { fill: #4681b9; }
.v { fill: #9a68bc; }
.mid { text-anchor: middle; }
.serif { font-family: "Liberation Serif", serif; font-style: italic; font-weight: 700; }
.glow { fill: #fff; stroke: #4a8ad0; stroke-width: 1.5px; filter: drop-shadow(0 0 1px #6aa5e0); }
.ln { fill: none; stroke: #777; stroke-width: 1.3px; }
.ar { fill: none; stroke: #4681b9; stroke-width: 4px; }
.ar.thin { stroke-width: 3px; }

.gallery { display: flex; height: 120px; margin-right: 20px; }
.cards { display: flex; flex: 1; min-width: 0; gap: 22px; padding: 0 13px; overflow: hidden; background: #fff; border: 2px solid #d2d2d2; border-right: 0; }
.style { display: flex; flex-direction: column; align-items: center; flex: none; width: 122px; color: #666; line-height: 30px; }
.sample { width: 122px; height: 74px; overflow: hidden; color: #000; font-size: 36px; font-weight: 400; line-height: 84px; text-align: left; white-space: nowrap; }
.big { font-size: 48px; font-weight: 700; line-height: 80px; }
.strong { font-weight: 700; }
.em { font: italic 27px/84px "Liberation Serif", serif; }
.scroll { display: flex; flex-direction: column; width: 30px; }
.scroll button { display: grid; place-items: center; flex: 1; background: #fff; border: 1px solid #c0c0c0; }
.scroll button + button { border-top: 0; }
.scroll button:disabled { background: #e6e6e6; }

.edit { display: flex; flex-direction: column; margin-top: -2px; padding-left: 24px; }
.cmd { display: flex; align-items: center; gap: 7px; height: 46px; }
.cmd .chev { margin-left: 4px; }
.cmd .far { margin-left: 17px; }
.cloud { display: flex; flex-direction: column; align-items: center; gap: 17px; padding-top: 13px; line-height: 31px; }
.collapse { display: flex; align-items: flex-end; justify-content: center; width: 80px; padding: 0 0 2px 18px; }

/* Document */
.doc { position: relative; flex: 1; min-height: 0; overflow: hidden; padding: 53px 41px 0 0; color: #000; }
.page { width: 1298px; margin: 0 auto; }
.doc-title { margin: 0 0 21px; padding-left: 50px; font-size: 48px; font-weight: 400; line-height: 80px; text-align: center; }
.caret { display: inline-block; width: 2px; height: 80px; margin-right: -2px; background: #000; vertical-align: top; }
.unit { margin: 0; padding-left: 8px; font-size: 28px; font-weight: 300; line-height: 42px; text-spacing-trim: space-all; }
.grid { width: 1298px; border-collapse: collapse; table-layout: fixed; font-size: 32px; line-height: 40px; text-align: center; }
.w1 { width: 106px; }
.w2 { width: 722px; }
.w3 { width: 187px; }
.w4 { width: 176px; }
.w5 { width: 107px; }
.grid th, .grid td { height: 86px; padding: 0; border: 1px solid #000; white-space: nowrap; }
.grid th { height: 85px; font-weight: 700; }
.grid .name { font-size: 28px; font-weight: 300; }
.name span { font-size: 24px; font-weight: 400; white-space: pre; }
.last { position: relative; }
.mark { display: inline-block; width: 20px; height: 18px; margin-right: -20px; vertical-align: 1px; }
.sm { width: 18px; height: 16px; margin-right: -18px; vertical-align: 2px; }
td > .sm:first-child { vertical-align: 5px; }
.lg-mark { width: 26px; height: 24px; margin-right: -26px; vertical-align: 6px; }
.eor { position: absolute; left: 100%; top: 13px; width: 18px; height: 16px; }

/* Annotation over the document */
.frame { position: absolute; left: 1415px; top: 11px; width: 1079px; height: 476px; border: 3px solid #fc3a3b; }
.callout { display: flex; align-items: center; gap: 18px; padding: 52px 0 0 70px; }
.num { display: grid; place-items: center; width: 40px; height: 40px; border-radius: 50%; background: #fc3a3b; color: #fff; font-size: 24px; }
.tip { position: relative; padding: 0 36px 0 12px; border-radius: 3px; background: #666; color: #fff; font-size: 32px; line-height: 67px; white-space: nowrap; }
.tip::before { content: ""; position: absolute; right: 100%; top: 25px; border: 9px solid transparent; border-right-color: #666; border-left: 0; }
.arrow { position: absolute; left: 625px; top: 142px; }
.credit { position: absolute; right: 14px; bottom: 8px; color: #888; font: 12px/16px "Liberation Sans", sans-serif; }
```
